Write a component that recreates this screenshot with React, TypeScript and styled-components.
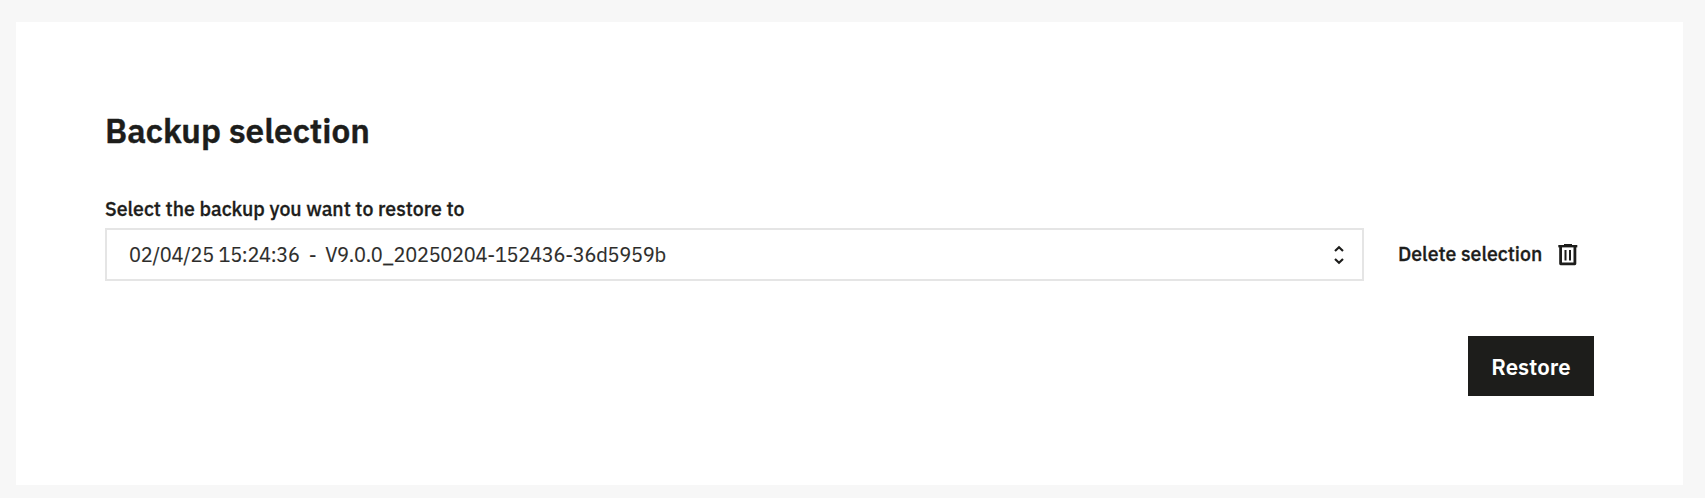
import React from "react";
import styled, { createGlobalStyle } from "styled-components";

const GlobalStyle = createGlobalStyle`
  *, *::before, *::after { box-sizing: border-box; }
  body {
    margin: 0;
    background: #f7f7f7;
    color: #1d1d1b;
    font-family: "IBM Plex Sans", Roboto, "Liberation Sans", sans-serif;
  }
`;

const Page = styled.main`
  height: 498px;
  padding: 22px 22px 13px 16px;
`;

const Card = styled.section`
  height: 463px;
  padding: 89px 89px 0 89px;
  background: #fff;
`;

const Title = styled.h1`
  margin: 0;
  font-size: 33.4px;
  line-height: 40px;
  font-weight: 600;
  -webkit-text-stroke: 0.4px currentColor;
  white-space: nowrap;
`;

const Label = styled.label`
  display: block;
  margin-top: 45px;
  font-size: 19.5px;
  line-height: 26px;
  font-weight: 500;
  -webkit-text-stroke: 0.3px currentColor;
  white-space: nowrap;
`;

const Row = styled.div`
  display: flex;
  align-items: center;
  margin-top: 6px;
`;

const Select = styled.button`
  display: flex;
  align-items: center;
  justify-content: space-between;
  width: 1259px;
  height: 53px;
  padding: 0 18px 0 22px;
  border: 2px solid #e5e5e5;
  background: #fff;
  color: #2c2c2a;
  font-family: inherit;
  font-size: 20px;
  line-height: 26px;
  text-align: left;
`;

const SelectValue = styled.span`
  letter-spacing: -0.29px;
  -webkit-text-stroke: 0.15px currentColor;
  white-space: pre;
`;

const DeleteButton = styled.button`
  display: flex;
  align-items: center;
  margin-left: 34px;
  padding: 0;
  border: 0;
  background: none;
  color: inherit;
  font-family: inherit;
  font-size: 19.5px;
  line-height: 26px;
  font-weight: 500;
  white-space: nowrap;
`;

const DeleteText = styled.span`
  width: 160px;
  padding-bottom: 1px;
  text-align: left;
  -webkit-text-stroke: 0.3px currentColor;
`;

const Actions = styled.div`
  display: flex;
  justify-content: flex-end;
  margin-top: 55px;
`;

const RestoreButton = styled.button`
  width: 126px;
  height: 60px;
  padding: 0;
  border: 0;
  background: #1d1d1b;
  color: #fff;
  font-family: inherit;
  font-size: 22.2px;
  font-weight: 600;
`;

const ChevronIcon = () => (
  <svg width="10" height="20" viewBox="0 0 10 20" fill="none" stroke="#1d1d1b" strokeWidth="2.2">
    <path d="M1 6 5 2.3 9 6M1 14 5 17.7 9 14" />
  </svg>
);

const TrashIcon = () => (
  <svg width="20" height="22" viewBox="0 0 20 22" fill="none" stroke="#1d1d1b">
    <path d="M0.3 2.2H19.3" strokeWidth="2.4" />
    <path d="M6 1H14" strokeWidth="2" />
    <path d="M2.6 3V19.8H16.9V3" strokeWidth="2.8" strokeLinejoin="round" />
    <path d="M7.5 6V16.6M12 6V16.6" strokeWidth="2" />
  </svg>
);

export default function App() {
  return (
    <>
      <GlobalStyle />
      <Page>
        <Card>
          <Title>Backup selection</Title>
          <Label htmlFor="backup">Select the backup you want to restore to</Label>
          <Row>
            <Select id="backup" type="button">
              <SelectValue>{"02/04/25 15:24:36  -  V9.0.0_20250204-152436-36d5959b"}</SelectValue>
              <ChevronIcon />
            </Select>
            <DeleteButton type="button">
              <DeleteText>Delete selection</DeleteText>
              <TrashIcon />
            </DeleteButton>
          </Row>
          <Actions>
            <RestoreButton type="button">Restore</RestoreButton>
          </Actions>
        </Card>
      </Page>
    </>
  );
}
